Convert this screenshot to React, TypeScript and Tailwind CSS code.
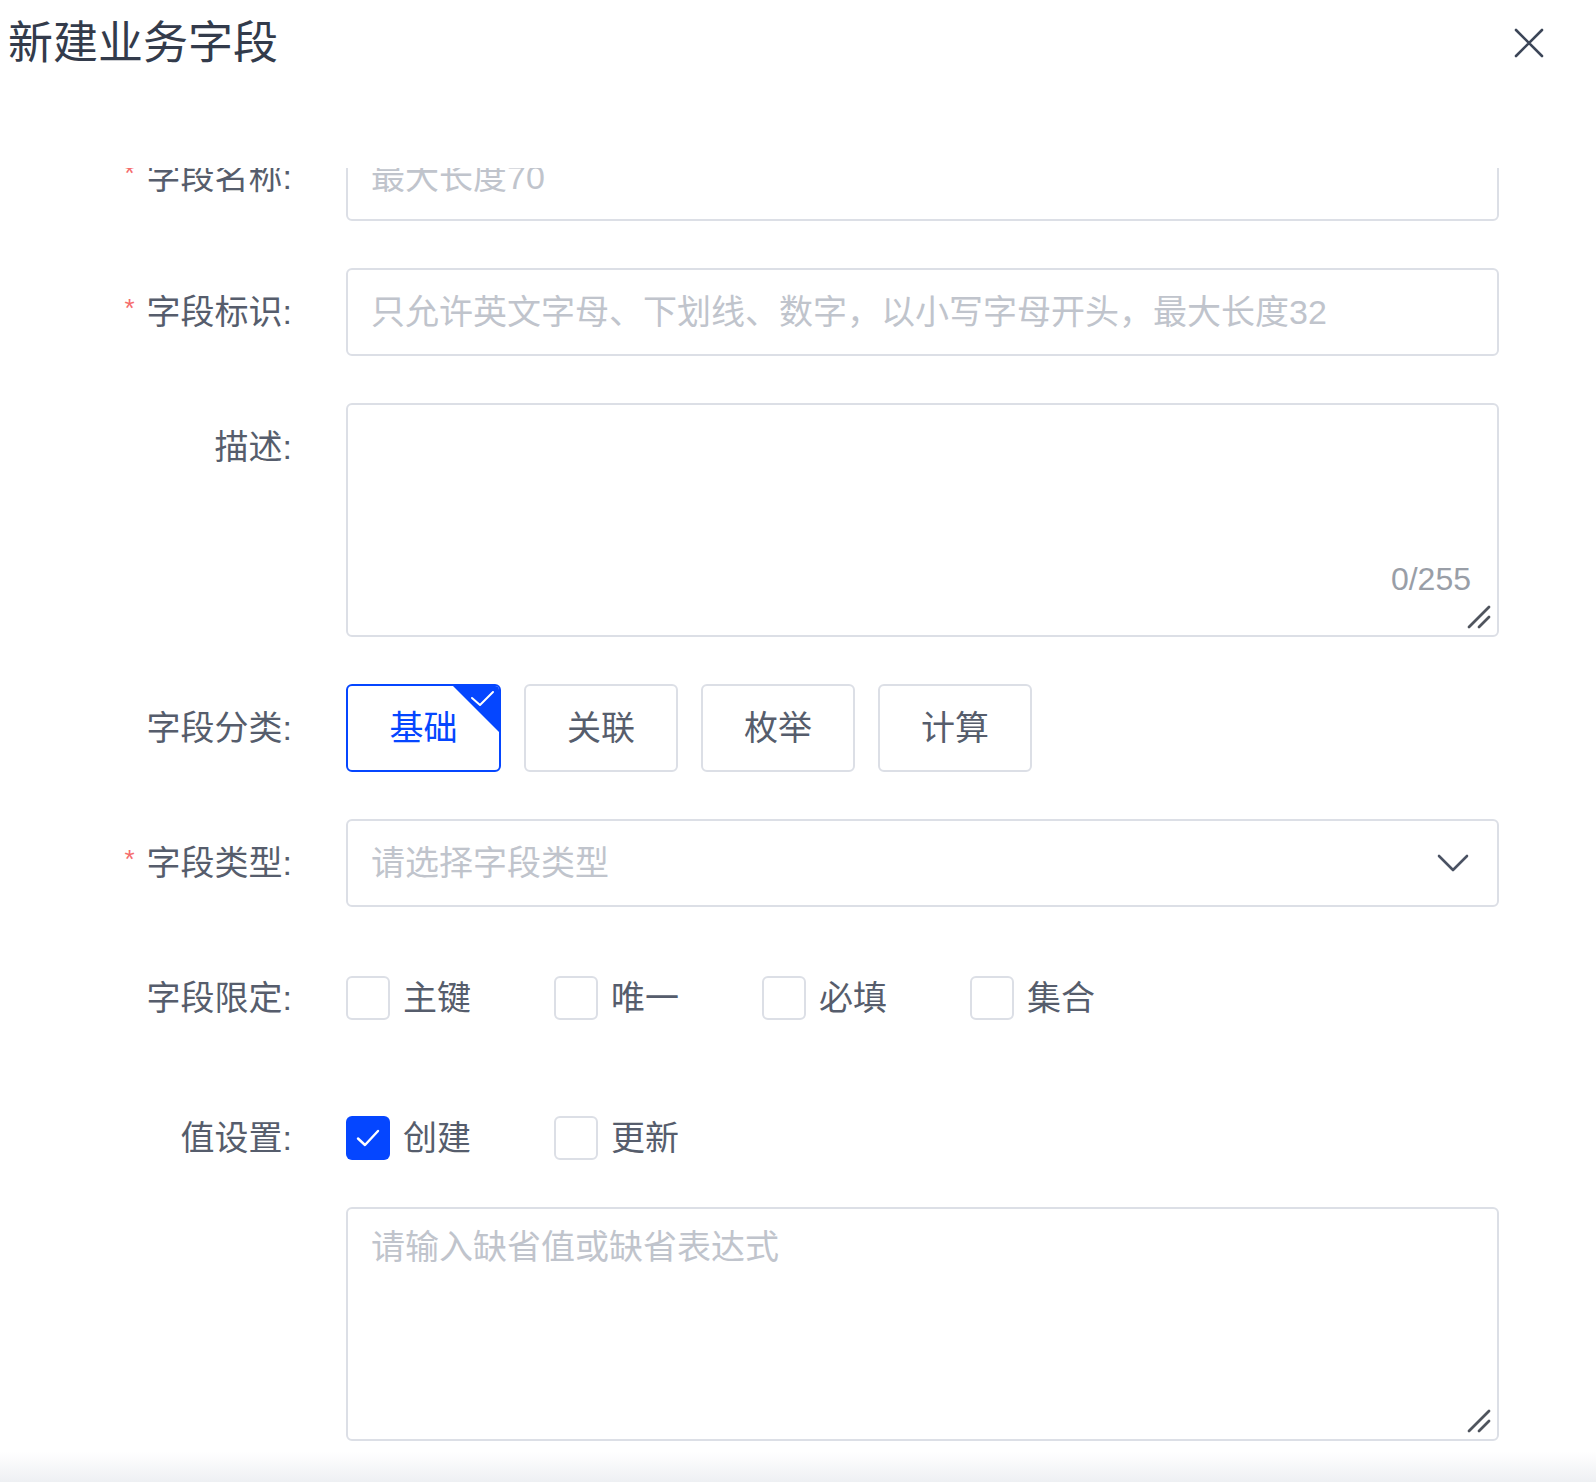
import React, { useState } from "react";

const font = "font-['Liberation_Sans','Noto_Sans_CJK_SC',sans-serif]";

function Label({ text, required }: { text: string; required?: boolean }) {
  return (
    <div className="w-[292px] shrink-0 h-[88px] flex items-center justify-end text-[34px] text-[#565d6c]">
      {required && <span className="text-[#f56c6c] text-[26px] mr-[12px] -mt-[8px]">*</span>}
      <span>{text}:</span>
    </div>
  );
}

function Check({ checked, label }: { checked?: boolean; label: string }) {
  return (
    <div className="w-[208px] flex items-center">
      <div
        className={
          checked
            ? "w-[44px] h-[44px] rounded-[6px] bg-[#0546ff] flex items-center justify-center"
            : "w-[44px] h-[44px] rounded-[6px] border-2 border-[#dcdfe6] bg-white"
        }
      >
        {checked && (
          <svg width="26" height="20" viewBox="0 0 26 20" fill="none">
            <path d="M3 10.5 L10 17 L23 3" stroke="white" strokeWidth="2.4" strokeLinecap="round" strokeLinejoin="round" />
          </svg>
        )}
      </div>
      <span className="ml-[13px] text-[34px] text-[#565d6c]">{label}</span>
    </div>
  );
}

function ResizeHandle() {
  return (
    <svg className="absolute right-[5px] bottom-[5px]" width="26" height="26" viewBox="0 0 26 26" fill="none">
      <path d="M3 23 L23 3" stroke="#50555e" strokeWidth="2.8" strokeLinecap="round" />
      <path d="M13 23 L23 13" stroke="#50555e" strokeWidth="2.8" strokeLinecap="round" />
    </svg>
  );
}

export default function App() {
  const [category, setCategory] = useState("基础");
  const categories = ["基础", "关联", "枚举", "计算"];

  return (
    <div className={`w-[1596px] h-[1482px] bg-white flex flex-col overflow-hidden ${font}`}>
      {/* header */}
      <div className="h-[168px] shrink-0 flex items-start justify-between">
        <h1 className="ml-[8px] mt-[14px] text-[45px] leading-[60px] text-[#333b4b]">新建业务字段</h1>
        <svg className="mr-[52px] mt-[28px]" width="30" height="30" viewBox="0 0 30 30" fill="none">
          <path d="M2 2 L28 28 M28 2 L2 28" stroke="#3c4658" strokeWidth="2.6" strokeLinecap="round" />
        </svg>
      </div>

      {/* scrolling body */}
      <div className="relative flex-1 overflow-hidden">
        <div className="-mt-[35px] flex flex-col">
          <div className="flex items-center">
            <Label text="字段名称" required />
            <div className="ml-[54px] w-[1153px] h-[88px] border-2 border-[#dcdfe6] rounded-[6px] flex items-center pl-[23px] text-[34px] text-[#c0c4cc]">
              最大长度70
            </div>
          </div>

          <div className="flex items-center mt-[47px]">
            <Label text="字段标识" required />
            <div className="ml-[54px] w-[1153px] h-[88px] border-2 border-[#dcdfe6] rounded-[6px] flex items-center pl-[23px] text-[34px] text-[#c0c4cc] whitespace-nowrap">
              只允许英文字母、下划线、数字，以小写字母开头，最大长度32
            </div>
          </div>

          <div className="flex items-start mt-[47px]">
            <Label text="描述" />
            <div className="relative ml-[54px] w-[1153px] h-[234px] border-2 border-[#dcdfe6] rounded-[6px]">
              <span className="absolute right-[26px] bottom-[32px] text-[32px] text-[#999ea7]">0/255</span>
              <ResizeHandle />
            </div>
          </div>

          <div className="flex items-center mt-[47px]">
            <Label text="字段分类" />
            <div className="ml-[54px] flex gap-[23px]">
              {categories.map((c) => {
                const active = c === category;
                return (
                  <button
                    key={c}
                    onClick={() => setCategory(c)}
                    className={
                      active
                        ? "relative w-[155px] h-[88px] rounded-[6px] border-2 border-[#0546ff] text-[#0546ff] text-[34px] overflow-hidden"
                        : "relative w-[154px] h-[88px] rounded-[6px] border-2 border-[#dcdfe6] text-[#565d6c] text-[34px]"
                    }
                  >
                    {c}
                    {active && (
                      <svg className="absolute top-0 right-0" width="46" height="46" viewBox="0 0 46 46">
                        <path d="M0 0 H46 V46 Z" fill="#0546ff" />
                        <path d="M19 12 L27 19 L40 6" stroke="white" strokeWidth="2" fill="none" strokeLinecap="round" strokeLinejoin="round" />
                      </svg>
                    )}
                  </button>
                );
              })}
            </div>
          </div>

          <div className="flex items-center mt-[47px]">
            <Label text="字段类型" required />
            <div className="ml-[54px] w-[1153px] h-[88px] border-2 border-[#dcdfe6] rounded-[6px] flex items-center justify-between pl-[23px] pr-[28px] text-[34px] text-[#c0c4cc]">
              <span>请选择字段类型</span>
              <svg width="32" height="18" viewBox="0 0 32 18" fill="none">
                <path d="M2 2 L16 16 L30 2" stroke="#4a5263" strokeWidth="2.6" strokeLinecap="round" strokeLinejoin="round" />
              </svg>
            </div>
          </div>

          <div className="flex items-center mt-[47px]">
            <Label text="字段限定" />
            <div className="ml-[54px] flex">
              <Check label="主键" />
              <Check label="唯一" />
              <Check label="必填" />
              <Check label="集合" />
            </div>
          </div>

          <div className="flex items-center mt-[52px]">
            <Label text="值设置" />
            <div className="ml-[54px] flex">
              <Check label="创建" checked />
              <Check label="更新" />
            </div>
          </div>

          <div className="flex mt-[25px]">
            <div className="w-[292px] shrink-0" />
            <div className="relative ml-[54px] w-[1153px] h-[234px] border-2 border-[#dcdfe6] rounded-[6px] pl-[23px] pt-[18px] text-[34px] leading-[40px] text-[#c0c4cc]">
              请输入缺省值或缺省表达式
              <ResizeHandle />
            </div>
          </div>
        </div>

        {/* footer shade */}
        <div className="absolute left-0 right-0 bottom-0 h-[30px] bg-gradient-to-b from-white/0 to-[#eef0f3]" />
      </div>
    </div>
  );
}
